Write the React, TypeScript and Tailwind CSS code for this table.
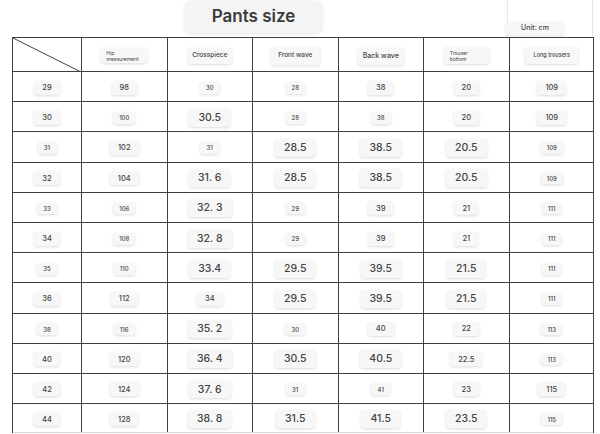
import React from "react"

type Size = "s" | "m" | "l"

interface Cell {
  v: string
  s: Size
}

const font = { fontFamily: "Inter, 'Noto Sans', 'Liberation Sans', sans-serif" }

const pillBase =
  "inline-flex items-center justify-center rounded-[3px] bg-[#f7f7f7] text-[#444] font-medium whitespace-nowrap shadow-[0_1px_3px_rgba(0,0,0,0.14)]"

const pillSize: Record<Size, string> = {
  s: "h-[12px] min-w-[19px] px-[6px] text-[6px]",
  m: "h-[14px] min-w-[23px] px-[8px] text-[7.5px]",
  l: "h-[18px] min-w-[37px] px-[9px] text-[10.5px]",
}

// rows: size, hip, crosspiece, front wave, back wave, trouser bottom, long trousers
const rows: Cell[][] = [
  [
    { v: "29", s: "m" }, { v: "98", s: "m" }, { v: "30", s: "s" }, { v: "28", s: "s" },
    { v: "38", s: "m" }, { v: "20", s: "m" }, { v: "109", s: "m" },
  ],
  [
    { v: "30", s: "m" }, { v: "100", s: "s" }, { v: "30.5", s: "l" }, { v: "28", s: "s" },
    { v: "38", s: "s" }, { v: "20", s: "m" }, { v: "109", s: "m" },
  ],
  [
    { v: "31", s: "s" }, { v: "102", s: "m" }, { v: "31", s: "s" }, { v: "28.5", s: "l" },
    { v: "38.5", s: "l" }, { v: "20.5", s: "l" }, { v: "109", s: "s" },
  ],
  [
    { v: "32", s: "m" }, { v: "104", s: "m" }, { v: "31. 6", s: "l" }, { v: "28.5", s: "l" },
    { v: "38.5", s: "l" }, { v: "20.5", s: "l" }, { v: "109", s: "s" },
  ],
  [
    { v: "33", s: "s" }, { v: "106", s: "s" }, { v: "32. 3", s: "l" }, { v: "29", s: "s" },
    { v: "39", s: "m" }, { v: "21", s: "m" }, { v: "111", s: "s" },
  ],
  [
    { v: "34", s: "m" }, { v: "108", s: "s" }, { v: "32. 8", s: "l" }, { v: "29", s: "s" },
    { v: "39", s: "m" }, { v: "21", s: "m" }, { v: "111", s: "s" },
  ],
  [
    { v: "35", s: "s" }, { v: "110", s: "s" }, { v: "33.4", s: "l" }, { v: "29.5", s: "l" },
    { v: "39.5", s: "l" }, { v: "21.5", s: "l" }, { v: "111", s: "s" },
  ],
  [
    { v: "36", s: "m" }, { v: "112", s: "m" }, { v: "34", s: "m" }, { v: "29.5", s: "l" },
    { v: "39.5", s: "l" }, { v: "21.5", s: "l" }, { v: "111", s: "s" },
  ],
  [
    { v: "38", s: "s" }, { v: "116", s: "s" }, { v: "35. 2", s: "l" }, { v: "30", s: "s" },
    { v: "40", s: "m" }, { v: "22", s: "m" }, { v: "113", s: "s" },
  ],
  [
    { v: "40", s: "m" }, { v: "120", s: "m" }, { v: "36. 4", s: "l" }, { v: "30.5", s: "l" },
    { v: "40.5", s: "l" }, { v: "22.5", s: "m" }, { v: "113", s: "s" },
  ],
  [
    { v: "42", s: "m" }, { v: "124", s: "m" }, { v: "37. 6", s: "l" }, { v: "31", s: "s" },
    { v: "41", s: "s" }, { v: "23", s: "m" }, { v: "115", s: "m" },
  ],
  [
    { v: "44", s: "m" }, { v: "128", s: "m" }, { v: "38. 8", s: "l" }, { v: "31.5", s: "l" },
    { v: "41.5", s: "l" }, { v: "23.5", s: "l" }, { v: "115", s: "s" },
  ],
]

function Pill({ cell }: { cell: Cell }) {
  return <span className={`${pillBase} ${pillSize[cell.s]}`}>{cell.v}</span>
}

const gridCols = "grid grid-cols-[68px_repeat(6,85.5px)]"
const line = "border-[#3f3f3f]"

export default function App() {
  return (
    <div className="w-[600px] h-[434px] bg-white overflow-hidden" style={font}>
      {/* header */}
      <div className="flex h-[37px] items-start">
        <div className="ml-[185px] mt-[1px] w-[137px] h-[32px] flex items-center justify-center rounded-[7px] bg-[#f4f4f4] shadow-[0_1px_4px_rgba(0,0,0,0.1)] text-[17px] font-semibold text-[#3a3a3a]">
          Pants size
        </div>
        <div className="ml-[185px] w-[86px] h-[37px] border-l border-r border-[#e6e6e6] pt-[12px]">
          <span className="-ml-[2px] inline-flex items-center justify-center w-[58px] h-[13px] rounded-[3px] bg-[#f7f7f7] shadow-[0_1px_3px_rgba(0,0,0,0.12)] text-[7px] font-medium text-[#444]">
            Unit: cm
          </span>
        </div>
      </div>

      {/* table */}
      <div className={`ml-[12px] w-[582px] border-l border-r ${line}`}>
        <div className={`${gridCols} h-[34px] border-t ${line}`}>
          <div className="relative">
            <svg className="absolute inset-0" width="68" height="34" viewBox="0 0 68 34">
              <line x1="0" y1="0" x2="68" y2="34" stroke="#3f3f3f" strokeWidth="1" />
            </svg>
          </div>
          <div className={`flex items-center justify-center border-l ${line} pt-[2px]`}>
            <span className="flex flex-col items-start justify-center w-[46px] h-[15px] px-[5px] rounded-[3px] bg-[#f7f7f7] shadow-[0_1px_3px_rgba(0,0,0,0.14)] text-[5px] leading-[6px] text-[#444]">
              <span>Hip</span>
              <span>measurement</span>
            </span>
          </div>
          <div className={`flex items-center justify-center border-l ${line} pt-[2px]`}>
            <span className={`${pillBase} h-[16px] w-[44px] text-[6.5px]`}>Crosspiece</span>
          </div>
          <div className={`flex items-center justify-center border-l ${line} pt-[2px]`}>
            <span className={`${pillBase} h-[18px] w-[49px] text-[6.5px]`}>Front wave</span>
          </div>
          <div className={`flex items-center justify-center border-l ${line} pt-[4px]`}>
            <span className={`${pillBase} h-[17px] w-[46px] text-[7px]`}>Back wave</span>
          </div>
          <div className={`flex items-center justify-center border-l ${line} pt-[2px]`}>
            <span className="flex flex-col items-start justify-center w-[45px] h-[17px] px-[6px] rounded-[3px] bg-[#f7f7f7] shadow-[0_1px_3px_rgba(0,0,0,0.14)] text-[5px] leading-[6px] text-[#444]">
              <span>Trouser</span>
              <span>bottom</span>
            </span>
          </div>
          <div className={`flex items-center justify-center border-l ${line} pt-[2px]`}>
            <span className={`${pillBase} h-[17px] w-[53px] text-[5.5px]`}>Long trousers</span>
          </div>
        </div>

        {rows.map((row, i) => (
          <div
            key={i}
            className={`${gridCols} h-[30.2px] border-t ${line} ${i === rows.length - 1 ? "border-b border-b-[#d8d8d8]" : ""}`}
          >
            {row.map((cell, j) => (
              <div
                key={j}
                className={`flex items-center justify-center pt-[2px] ${j > 0 ? `border-l ${line}` : ""}`}
              >
                <Pill cell={cell} />
              </div>
            ))}
          </div>
        ))}
      </div>
    </div>
  )
}
